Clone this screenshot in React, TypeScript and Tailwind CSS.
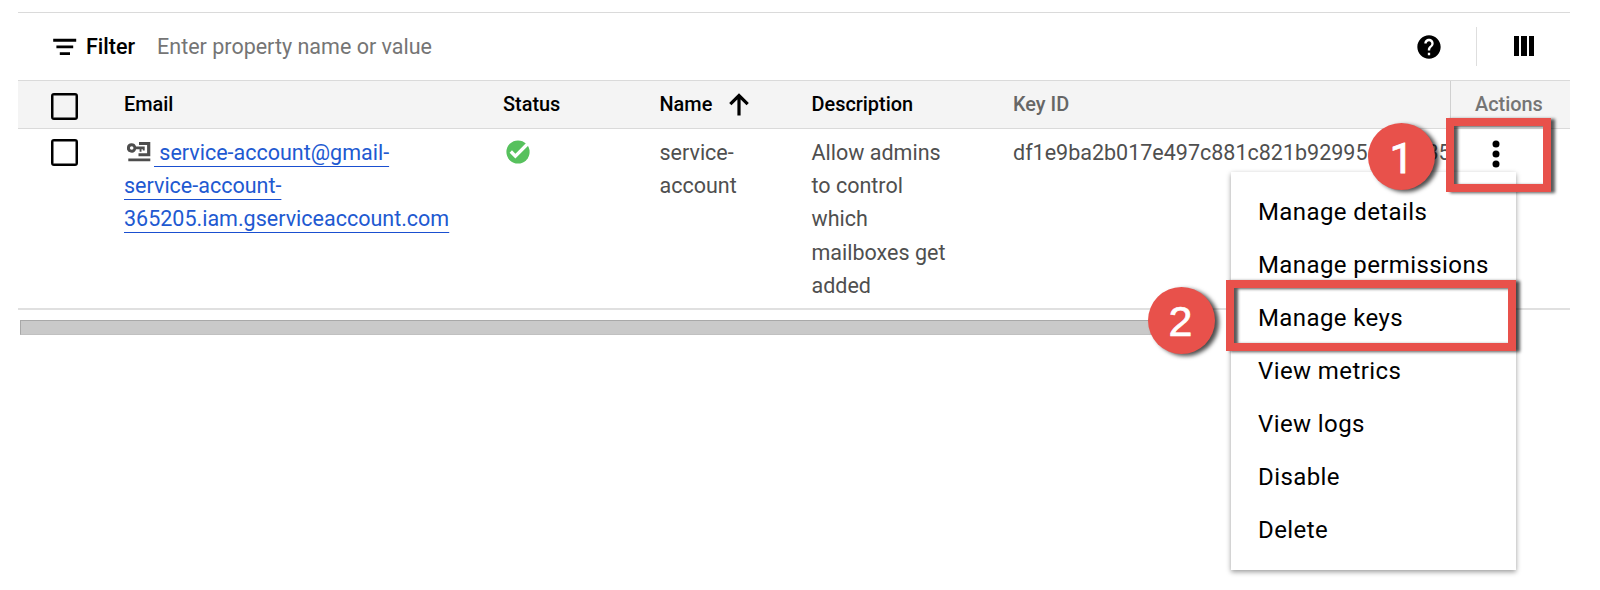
import React from "react";

const menuItems = [
  "Manage details",
  "Manage permissions",
  "Manage keys",
  "View metrics",
  "View logs",
  "Disable",
  "Delete",
];

const gridCols =
  "grid grid-cols-[33px_73px_379px_156.5px_152px_201.5px_437px_120px]";

function FilterIcon() {
  return (
    <svg className="h-[18px] w-6 shrink-0" viewBox="0 0 24 18">
      <path d="M.2 .8h23v2.9H.2zM3.4 7.5h16.8v2.8H3.4zM6.8 14.2h10.2v2.7H6.8z" />
    </svg>
  );
}

function HelpIcon() {
  return (
    <svg className="size-7" viewBox="0 0 24 24">
      <path d="M12 2C6.48 2 2 6.48 2 12s4.48 10 10 10 10-4.48 10-10S17.52 2 12 2zm1 17h-2v-2h2v2zm2.07-7.75l-.9.92C13.45 12.9 13 13.5 13 15h-2v-.5c0-1.1.45-2.1 1.17-2.83l1.24-1.26c.37-.36.59-.86.59-1.41 0-1.1-.9-2-2-2s-2 .9-2 2H8c0-2.21 1.79-4 4-4s4 1.79 4 4c0 .88-.36 1.68-.93 2.25z" />
    </svg>
  );
}

function ColumnsIcon() {
  return (
    <svg className="h-5 w-5" viewBox="0 0 20 20">
      <path d="M0 0h5v20H0zM7 0h6v20H7zM15 0h5v20h-5z" />
    </svg>
  );
}

function Checkbox() {
  return <div className="size-[27px] rounded-[3px] border-[2.5px] border-black bg-transparent shadow-[inset_0_0_0_0.5px_#000]" />;
}

function ServiceAccountIcon() {
  return (
    <svg className="relative top-[2px] inline-block h-5 w-6 align-baseline" viewBox="0 0 24 20">
      <g fill="#4d4d4d">
        <path fillRule="evenodd" d="M4.700 1.300a4.700 4.700 0 0 1 4.400 3.300h8.600v3.900h-1.900V7.300h-1.300v2.400h-1.900V7.300H9.100A4.700 4.700 0 1 1 4.700 1.300zm0 2.900a1.800 1.800 0 1 0 0 3.600 1.800 1.800 0 0 0 0-3.600z" />
        <path d="M12 0h11.300v14.300H11.500v-3h8.600V3H12zM1.300 16.400h22v2.900h-22z" />
      </g>
    </svg>
  );
}

function SortArrow() {
  return (
    <svg className="h-[23px] w-5" viewBox="0 0 20 23" fill="none" stroke="#000" strokeWidth="3.200">
      <path d="M10 22.500V2.600M1.300 11.200L10 2.500l8.700 8.700" />
    </svg>
  );
}

function StatusIcon() {
  return (
    <svg className="size-6" viewBox="0 0 24 24">
      <circle cx="12" cy="12" r="11.600" fill="#57c15d" />
      <path d="M4.800 11.500l4.600 4.600L21.500 4" fill="none" stroke="#fff" strokeWidth="3.300" />
    </svg>
  );
}

const badge =
  "flex size-[67px] items-center justify-center rounded-full bg-[#e8514b] leading-none text-white shadow-[4px_2px_4px_rgba(0,0,0,0.7)]";

export default function App() {
  return (
    <div className="relative h-[590px] w-[1600px] overflow-hidden bg-white pt-3 pl-[18px] font-[Roboto,sans-serif] text-[21.5px] leading-[33.2px] text-[#4f4f4f]">
      <div className="w-[1552px] border-t border-[#dadada]">
        <div className="flex h-[67px] items-center pr-9 pl-[35px]">
          <FilterIcon />
          <span className="ml-[9px] font-medium text-black">Filter</span>
          <span className="ml-[22px] text-[#757575]">Enter property name or value</span>
          <div className="ml-auto flex items-center">
            <HelpIcon />
            <div className="mr-[37px] ml-[33px] h-[39px] w-px bg-[#dedede]" />
            <div className="pb-px"><ColumnsIcon /></div>
          </div>
        </div>

        <div className={gridCols + " h-[49px] border-y border-[#dadada] bg-[#f4f4f4] text-[19.9px] font-medium text-black"}>
          <div />
          <div className="pt-3"><Checkbox /></div>
          <div className="pt-[7px]">Email</div>
          <div className="pt-[7px]">Status</div>
          <div className="flex gap-[17px] pt-[7px]">
            Name
            <div className="pt-[5px]"><SortArrow /></div>
          </div>
          <div className="pt-[7px]">Description</div>
          <div className="pt-[7px] text-[#666]">Key ID</div>
          <div className="border-l border-[#d0d0d0] pt-[7px] pl-6 text-[#757575]">Actions</div>
        </div>

        <div className={gridCols + " h-[181px] border-b-2 border-[#e0e0e0]"}>
          <div />
          <div className="pt-[10px]"><Checkbox /></div>
          <div className="pt-[7px]">
            <span className="ml-[3px]"><ServiceAccountIcon /></span>
            <a className="ml-[3px] text-[#2159d1] underline decoration-[#1a4fd0] decoration-1 underline-offset-[6px]">
              <span>&nbsp;service-account@gmail-</span>
              <br />
              service-account-
              <br />
              365205.iam.gserviceaccount.com
            </a>
          </div>
          <div className="pt-[11px] pl-[2.500px]"><StatusIcon /></div>
          <div className="pt-[7px]">service-<br />account</div>
          <div className="pt-[7px]">Allow admins<br />to control<br />which<br />mailboxes get<br />added</div>
          <div className="overflow-hidden pt-[7px] whitespace-nowrap">df1e9ba2b017e497c881c821b92995e4c0735</div>
          <div className="pt-[11px] pl-[41.5px]">
            <svg className="h-7 w-2" viewBox="0 0 8 28">
              <circle cx="4" cy="4" r="3.500" />
              <circle cx="4" cy="14" r="3.500" />
              <circle cx="4" cy="24" r="3.500" />
            </svg>
          </div>
        </div>
        <div className="mt-[10px] ml-[2px] h-[15px] w-[1190px] border border-t-[#a8a8a8] border-r-[#c9c9c9] border-b-[#c0c0c0] border-l-[#a8a8a8] bg-[#c9c9c9]" />
      </div>

      <div className="absolute top-[172px] left-[1231px] h-[398px] w-[285px] bg-white pt-[14px] pl-[27px] text-2xl tracking-[0.4px] text-black shadow-[0_2px_5px_rgba(0,0,0,0.4)]">
        {menuItems.map((item) => (
          <div key={item} className="h-[53px] leading-[53px]">{item}</div>
        ))}
      </div>

      <div className="absolute top-[118px] left-[1446px] h-[74px] w-[105px] border-8 border-[#e8514b] shadow-[4px_1px_3px_rgba(0,0,0,0.65),inset_4px_1px_3px_rgba(0,0,0,0.65)]" />
      <div className="absolute top-[280px] left-[1226px] h-[71px] w-[290px] border-8 border-[#e8514b] shadow-[4px_1px_3px_rgba(0,0,0,0.65),inset_4px_1px_3px_rgba(0,0,0,0.65)]" />
      <div className="absolute top-[123px] left-[1368px]">
        <div className={badge + " pt-[3px] text-[43px] [-webkit-text-stroke:0.8px_white]"}>1</div>
      </div>
      <div className="absolute top-[287px] left-[1148px]">
        <div className={badge + " pr-[2px] pt-px font-['Liberation_Sans',sans-serif] text-[43px] [-webkit-text-stroke:0.7px_white]"}>2</div>
      </div>
    </div>
  );
}
